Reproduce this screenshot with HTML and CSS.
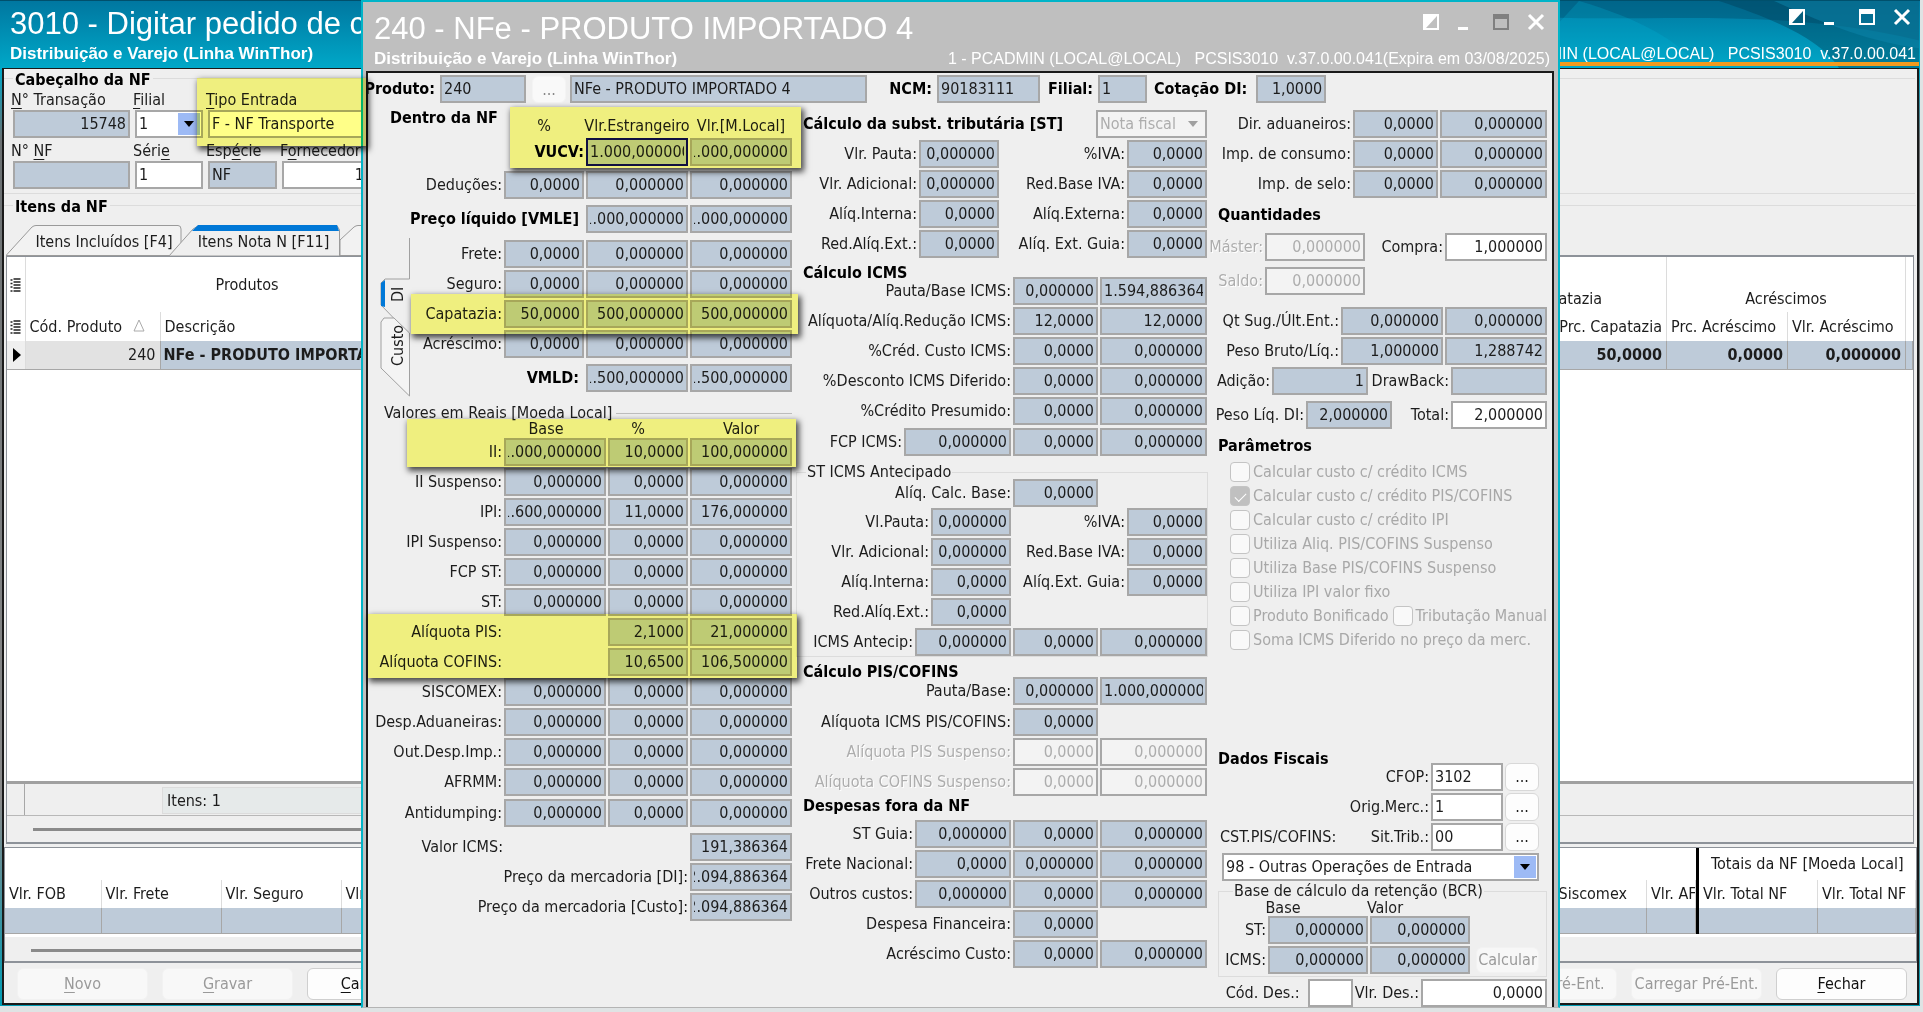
FILE: index.html
```html
<!DOCTYPE html>
<html lang="pt-BR">
<head>
<meta charset="utf-8">
<title>3010 - Digitar pedido de compra</title>
<link rel="stylesheet" href="styles.css">
</head>
<body>
<div class="desktop">

<main class="window">
  <header class="titlebar">
    <svg class="swirl" viewBox="0 0 360 68" preserveAspectRatio="none" aria-hidden="true">
      <path d="M0 17C110 20 230 8 360 40V0H0Z" fill="#00506e" opacity=".45"/>
      <path d="M20 0C80 18 120 40 140 68H0V22Z" fill="#00b4d8" opacity=".25"/>
      <path d="M160 0C220 20 262 40 280 68H360V0Z" fill="#003c56" opacity=".4"/>
      <path d="M215 0C250 15 300 40 360 48V0Z" fill="#0b86ab" opacity=".5"/>
    </svg>
    <div class="titles">
      <h1>3010 - Digitar pedido de compra</h1>
      <p class="sub">Distribuição e Varejo (Linha WinThor)</p>
    </div>
    <div class="titleside">
      <div class="controls">
        <button aria-label="Alternar"><svg viewBox="0 0 18 18"><path d="M1 1H17V17H1Z" fill="#fff"/><path d="M15 3V15H4Z" fill="#06607e"/></svg></button>
        <button aria-label="Minimizar"><svg viewBox="0 0 18 18"><path d="M1 14H11V17H1Z" fill="#fff"/></svg></button>
        <button aria-label="Maximizar"><svg viewBox="0 0 18 18"><path d="M1 1H17V17H1ZM3 6V15H15V6Z" fill="#fff" fill-rule="evenodd"/></svg></button>
        <button aria-label="Fechar janela"><svg viewBox="0 0 18 18"><path d="M2 2L16 16M16 2L2 16" stroke="#fff" stroke-width="3"/></svg></button>
      </div>
      <p class="env">1 - PCADMIN (LOCAL@LOCAL)   PCSIS3010  v.37.0.00.041</p>
    </div>
  </header>

  <div class="client">
    <section class="group head-group">
      <h2>Cabeçalho da NF</h2>
      <div class="line">
        <label class="stack s117"><span><u>N</u>° Transação</span><input class="num" value="15748" readonly></label>
        <label class="stack s68"><span><u>F</u>ilial</span><span class="combo"><select><option>1</option></select><i></i></span></label>
        <label class="stack s280"><span><u>T</u>ipo Entrada</span><span class="combo"><select><option>F - NF Transporte</option></select></span></label>
      </div>
      <div class="line">
        <label class="stack s117"><span>N° <u>N</u>F</span><input readonly></label>
        <label class="stack s68"><span>Séri<u>e</u></span><input class="white" value="1"></label>
        <label class="stack s69"><span>Esp<u>é</u>cie</span><input value="NF" readonly></label>
        <label class="stack s86"><span>F<u>o</u>rnecedor</span><input class="white num" value="1"></label>
      </div>
    </section>

    <section class="group items-group">
      <h2>Itens da NF</h2>
      <nav class="tabs">
        <button class="tab t1"><svg viewBox="0 0 176 31" preserveAspectRatio="none"><path d="M0 30.500L26 2Q28 .5 30 .5H172Q175 .5 175 4V30.500Z" fill="#f2f2f2" stroke="#9a9a9a"/></svg><span>Itens Incluídos [F4]</span></button>
        <button class="tab t2"><svg viewBox="0 0 171 31" preserveAspectRatio="none"><path d="M0 31L24 4L30 .5H168L170.500 5V31Z" fill="#efefef" stroke="#9a9a9a"/><path d="M23 6L29 0H168L170 6Z" fill="#0078d7"/></svg><span>Itens Nota N [F11]</span></button>
        <button class="tab t3"><svg viewBox="0 0 176 31" preserveAspectRatio="none"><path d="M0 15L14 2Q16 .5 18 .5H172Q175 .5 175 4V30.500H0Z" fill="#f2f2f2" stroke="#9a9a9a"/></svg><span>Custos [F12]</span></button>
      </nav>
      <div class="gridbox">
        <table class="items">
          <colgroup><col class="c18"><col class="c135"><col><col class="c140"><col class="c121"><col class="c118"><col class="c7"></colgroup>
          <thead>
            <tr class="bands">
              <th><svg class="rows" viewBox="0 0 10 14"><path d="M3 1H10M3 4H10M3 7H10M3 10H10M3 13H10M0 2H2M0 5.500H2M0 9H2M0 13H2" stroke="#222" stroke-width="1.500"/></svg></th>
              <th colspan="2" class="products">Produtos</th>
              <th class="band sep">Capatazia</th><th colspan="2" class="band mid sep">Acréscimos</th><th></th>
            </tr>
            <tr class="cols">
              <th><svg class="rows" viewBox="0 0 10 14"><path d="M3 1H10M3 4H10M3 7H10M3 10H10M3 13H10M0 2H2M0 5.500H2M0 9H2M0 13H2" stroke="#222" stroke-width="1.500"/></svg></th>
              <th class="sep">Cód. Produto <svg class="sort" viewBox="0 0 12 13"><path d="M6 1L11 12H1Z" fill="none" stroke="#aaa"/></svg></th>
              <th>Descrição</th><th class="end sep">Prc. Capatazia</th><th class="sep">Prc. Acréscimo</th><th class="sep">Vlr. Acréscimo</th><th></th>
            </tr>
          </thead>
          <tbody><tr>
            <td class="mark"><svg viewBox="0 0 8 14"><path d="M0 0L8 7L0 14Z" fill="#000"/></svg></td>
            <td class="code">240</td><td class="name">NFe - PRODUTO IMPORTADO 4</td><td>50,0000</td><td>0,0000</td><td>0,000000</td><td></td>
          </tr></tbody>
        </table>
        <div class="sumbar"><span class="ind"></span><span class="count">Itens: 1</span></div>
        <div class="hscroll"><span></span></div>
      </div>
    </section>

    <section class="totals">
      <div class="split">
        <table class="sums wide">
          <colgroup><col class="c96"><col class="c120"><col class="c120"><col><col class="c120"><col class="c49"></colgroup>
          <tr class="cap"><th colspan="6"></th></tr>
          <tr class="cols"><th>Vlr. FOB</th><th>Vlr. Frete</th><th>Vlr. Seguro</th><th>Vlr. Despesas</th><th class="end">Vlr. Siscomex</th><th>Vlr. AFRMM</th></tr>
          <tr class="vals"><td></td><td></td><td></td><td></td><td></td><td></td></tr>
        </table>
        <table class="sums narrow">
          <colgroup><col class="c120"><col></colgroup>
          <tr class="cap"><th colspan="2">Totais da NF [Moeda Local]</th></tr>
          <tr class="cols"><th>Vlr. Total NF</th><th>Vlr. Total NF</th></tr>
          <tr class="vals"><td></td><td></td></tr>
        </table>
      </div>
      <div class="hscroll"><span></span></div>
    </section>

    <footer class="actions">
      <button disabled><u>N</u>ovo</button>
      <button disabled><u>G</u>ravar</button>
      <button><u>C</u>ancelar</button>
      <span class="grow"></span>
      <button disabled>Salvar Pré-Ent.</button>
      <button disabled>Carregar Pré-Ent.</button>
      <button><u>F</u>echar</button>
    </footer>
  </div>
</main>

<section class="dialog" role="dialog" aria-labelledby="dlg">
  <header class="titlebar">
    <div class="titles">
      <h1 id="dlg">240 - NFe - PRODUTO IMPORTADO 4</h1>
      <p class="sub">Distribuição e Varejo (Linha WinThor)</p>
    </div>
    <div class="titleside">
      <div class="controls">
        <button aria-label="Alternar"><svg viewBox="0 0 18 18"><path d="M1 1H17V17H1Z" fill="#fff"/><path d="M15 3V15H4Z" fill="#bfbfbf"/></svg></button>
        <button aria-label="Minimizar"><svg viewBox="0 0 18 18"><path d="M1 14H11V17H1Z" fill="#fff"/></svg></button>
        <button aria-label="Maximizar"><svg viewBox="0 0 18 18"><path d="M1 1H17V17H1ZM3 6V15H15V6Z" fill="#808080" fill-rule="evenodd"/></svg></button>
        <button aria-label="Fechar"><svg viewBox="0 0 18 18"><path d="M2 2L16 16M16 2L2 16" stroke="#fff" stroke-width="3"/></svg></button>
      </div>
      <p class="env">1 - PCADMIN (LOCAL@LOCAL)   PCSIS3010  v.37.0.00.041(Expira em 03/08/2025)</p>
    </div>
  </header>

  <div class="body">
    <div class="ident">
      <label class="b first"><span>Produto:</span><input class="w86" value="240" readonly></label>
      <button class="dots" disabled>...</button>
      <input class="w297" aria-label="Descrição do produto" value="NFe - PRODUTO IMPORTADO 4" readonly>
      <label class="b ncm"><span>NCM:</span><input class="w103" value="90183111" readonly></label>
      <label class="b"><span>Filial:</span><input class="w49" value="1" readonly></label>
      <label class="b cot"><span>Cotação DI:</span><input class="num w70" value="1,0000" readonly></label>
    </div>

    <div class="columns">
      <!-- Dentro da NF -->
      <div class="col one">
        <div class="inside marked m-vucv">
          <h2>Dentro da NF</h2>
          <div class="vucv">
            <div class="row heads"><span class="w80">%</span><span class="w102">Vlr.Estrangeiro</span><span class="w102">Vlr.[M.Local]</span></div>
            <div class="row"><label class="b"><span>VUCV:</span><input class="focus w102" value="1.000,000000"></label><input aria-label="VUCV local" class="tail w102" value="1.000,000000" readonly></div>
          </div>
        </div>
        <div class="row g3"><label>Deduções:<input class="num w80" value="0,0000" readonly></label><input aria-label="Deduções" class="num w102" value="0,000000" readonly><input aria-label="Deduções local" class="num w102" value="0,000000" readonly></div>
        <div class="row g6"><label class="b wide-gap">Preço líquido [VMLE]<input class="tail w102" value="1.000,000000" readonly></label><input aria-label="VMLE local" class="tail w102" value="1.000,000000" readonly></div>
        <div class="di">
          <nav class="vtabs">
            <svg viewBox="0 0 30 160" aria-hidden="true">
              <path d="M29.500 0V41H5L1 45V67L29 96" fill="#efefef" stroke="#a0a0a0"/>
              <path d="M1 68V45L5 42V69Z" fill="#0078d7"/>
              <path d="M14 80H4L1 84V130L29.500 158V95Z" fill="#f4f4f4" stroke="#a0a0a0"/>
            </svg>
            <button>DI</button><button>Custo</button>
          </nav>
          <div class="rows-col">
            <div class="row"><label>Frete:<input class="num w80" value="0,0000" readonly></label><input aria-label="Frete" class="num w102" value="0,000000" readonly><input aria-label="Frete local" class="num w102" value="0,000000" readonly></div>
            <div class="row"><label>Seguro:<input class="num w80" value="0,0000" readonly></label><input aria-label="Seguro" class="num w102" value="0,000000" readonly><input aria-label="Seguro local" class="num w102" value="0,000000" readonly></div>
            <div class="row marked m-cap"><label>Capatazia:<input class="num w80" value="50,0000" readonly></label><input aria-label="Capatazia" class="num w102" value="500,000000" readonly><input aria-label="Capatazia local" class="num w102" value="500,000000" readonly></div>
            <div class="row"><label>Acréscimo:<input class="num w80" value="0,0000" readonly></label><input aria-label="Acréscimo" class="num w102" value="0,000000" readonly><input aria-label="Acréscimo local" class="num w102" value="0,000000" readonly></div>
            <div class="row g6"><label class="b wide-gap">VMLD:<input class="tail w102" value="1.500,000000" readonly></label><input aria-label="VMLD local" class="tail w102" value="1.500,000000" readonly></div>
          </div>
        </div>
        <div class="caption"><span>Valores em Reais [Moeda Local]</span></div>
        <div class="marked m-ii">
          <div class="row heads reais"><span class="w80">Base</span><span class="w60">%</span><span class="w102">Valor</span></div>
          <div class="row"><label>II:<input class="tail w102" value="1.000,000000" readonly></label><input aria-label="II %" class="num w80" value="10,0000" readonly><input aria-label="II valor" class="num w102" value="100,000000" readonly></div>
        </div>
        <div class="row"><label>II Suspenso:<input class="num w102" value="0,000000" readonly></label><input aria-label="II Suspenso %" class="num w80" value="0,0000" readonly><input aria-label="II Suspenso valor" class="num w102" value="0,000000" readonly></div>
        <div class="row"><label>IPI:<input class="tail w102" value="1.600,000000" readonly></label><input aria-label="IPI %" class="num w80" value="11,0000" readonly><input aria-label="IPI valor" class="num w102" value="176,000000" readonly></div>
        <div class="row"><label>IPI Suspenso:<input class="num w102" value="0,000000" readonly></label><input aria-label="IPI Suspenso %" class="num w80" value="0,0000" readonly><input aria-label="IPI Suspenso valor" class="num w102" value="0,000000" readonly></div>
        <div class="row"><label>FCP ST:<input class="num w102" value="0,000000" readonly></label><input aria-label="FCP ST %" class="num w80" value="0,0000" readonly><input aria-label="FCP ST valor" class="num w102" value="0,000000" readonly></div>
        <div class="row"><label>ST:<input class="num w102" value="0,000000" readonly></label><input aria-label="ST %" class="num w80" value="0,0000" readonly><input aria-label="ST valor" class="num w102" value="0,000000" readonly></div>
        <div class="marked m-pis">
          <div class="row"><label class="far">Alíquota PIS:<input class="num w80" value="2,1000" readonly></label><input aria-label="PIS valor" class="num w102" value="21,000000" readonly></div>
          <div class="row"><label class="far">Alíquota COFINS:<input class="num w80" value="10,6500" readonly></label><input aria-label="COFINS valor" class="num w102" value="106,500000" readonly></div>
        </div>
        <div class="row"><label>SISCOMEX:<input class="num w102" value="0,000000" readonly></label><input aria-label="SISCOMEX %" class="num w80" value="0,0000" readonly><input aria-label="SISCOMEX valor" class="num w102" value="0,000000" readonly></div>
        <div class="row"><label>Desp.Aduaneiras:<input class="num w102" value="0,000000" readonly></label><input aria-label="Desp.Aduaneiras %" class="num w80" value="0,0000" readonly><input aria-label="Desp.Aduaneiras valor" class="num w102" value="0,000000" readonly></div>
        <div class="row"><label>Out.Desp.Imp.:<input class="num w102" value="0,000000" readonly></label><input aria-label="Out.Desp.Imp. %" class="num w80" value="0,0000" readonly><input aria-label="Out.Desp.Imp. valor" class="num w102" value="0,000000" readonly></div>
        <div class="row"><label>AFRMM:<input class="num w102" value="0,000000" readonly></label><input aria-label="AFRMM %" class="num w80" value="0,0000" readonly><input aria-label="AFRMM valor" class="num w102" value="0,000000" readonly></div>
        <div class="row g3"><label>Antidumping:<input class="num w102" value="0,000000" readonly></label><input aria-label="Antidumping %" class="num w80" value="0,0000" readonly><input aria-label="Antidumping valor" class="num w102" value="0,000000" readonly></div>
        <div class="row g6"><label class="farther">Valor ICMS:<input class="num w102" value="191,386364" readonly></label></div>
        <div class="row"><label>Preço da mercadoria [DI]:<input class="tail w102" value="2.094,886364" readonly></label></div>
        <div class="row"><label>Preço da mercadoria [Custo]:<input class="tail w102" value="2.094,886364" readonly></label></div>
      </div>

      <!-- Impostos -->
      <div class="col two">
        <div class="row g3 between"><h2>Cálculo da subst. tributária [ST]</h2><span class="combo off w111"><select disabled aria-label="Origem do cálculo"><option>Nota fiscal</option></select><i></i></span></div>
        <div class="row"><label>Vlr. Pauta:<input class="num w80" value="0,000000" readonly></label><label class="p206">%IVA:<input class="num w80" value="0,0000" readonly></label></div>
        <div class="row"><label>Vlr. Adicional:<input class="num w80" value="0,000000" readonly></label><label class="p206">Red.Base IVA:<input class="num w80" value="0,0000" readonly></label></div>
        <div class="row"><label>Alíq.Interna:<input class="num w80" value="0,0000" readonly></label><label class="p206">Alíq.Externa:<input class="num w80" value="0,0000" readonly></label></div>
        <div class="row"><label>Red.Alíq.Ext.:<input class="num w80" value="0,0000" readonly></label><label class="p206">Alíq. Ext. Guia:<input class="num w80" value="0,0000" readonly></label></div>
        <h2 class="tuck">Cálculo ICMS</h2>
        <div class="row"><label>Pauta/Base ICMS:<input class="num w85" value="0,000000" readonly></label><input aria-label="Base ICMS" class="num w107" value="1.594,886364" readonly></div>
        <div class="row"><label>Alíquota/Alíq.Redução ICMS:<input class="num w85" value="12,0000" readonly></label><input aria-label="Redução ICMS" class="num w107" value="12,0000" readonly></div>
        <div class="row"><label>%Créd. Custo ICMS:<input class="num w85" value="0,0000" readonly></label><input aria-label="Créd. Custo ICMS" class="num w107" value="0,000000" readonly></div>
        <div class="row"><label>%Desconto ICMS Diferido:<input class="num w85" value="0,0000" readonly></label><input aria-label="Desconto ICMS Diferido" class="num w107" value="0,000000" readonly></div>
        <div class="row"><label>%Crédito Presumido:<input class="num w85" value="0,0000" readonly></label><input aria-label="Crédito Presumido" class="num w107" value="0,000000" readonly></div>
        <div class="row g3"><label>FCP ICMS:<input class="num w107" value="0,000000" readonly></label><input aria-label="FCP ICMS %" class="num w85" value="0,0000" readonly><input aria-label="FCP ICMS valor" class="num w107" value="0,000000" readonly></div>
        <fieldset class="antecip">
          <legend>ST ICMS Antecipado</legend>
          <div class="row skip"><label>Alíq. Calc. Base:<input class="num w85" value="0,0000" readonly></label></div>
          <div class="row"><label>Vl.Pauta:<input class="num w80" value="0,000000" readonly></label><label class="p194">%IVA:<input class="num w80" value="0,0000" readonly></label></div>
          <div class="row"><label>Vlr. Adicional:<input class="num w80" value="0,000000" readonly></label><label class="p194">Red.Base IVA:<input class="num w80" value="0,0000" readonly></label></div>
          <div class="row"><label>Alíq.Interna:<input class="num w80" value="0,0000" readonly></label><label class="p194">Alíq.Ext. Guia:<input class="num w80" value="0,0000" readonly></label></div>
          <div class="row skip196"><label>Red.Alíq.Ext.:<input class="num w80" value="0,0000" readonly></label></div>
          <div class="row"><label>ICMS Antecip:<input class="num w96" value="0,000000" readonly></label><input aria-label="ICMS Antecip %" class="num w85" value="0,0000" readonly><input aria-label="ICMS Antecip valor" class="num w107" value="0,000000" readonly></div>
        </fieldset>
        <h2 class="tuck">Cálculo PIS/COFINS</h2>
        <div class="row g3"><label>Pauta/Base:<input class="num w85" value="0,000000" readonly></label><input aria-label="Base PIS/COFINS" class="num w107" value="1.000,000000" readonly></div>
        <div class="row g3 skip"><label>Alíquota ICMS PIS/COFINS:<input class="num w85" value="0,0000" readonly></label></div>
        <div class="row"><label class="dim">Alíquota PIS Suspenso:<input class="num w85" value="0,0000" disabled></label><input aria-label="PIS Suspenso" class="num w107" value="0,000000" disabled></div>
        <div class="row"><label class="dim">Alíquota COFINS Suspenso:<input class="num w85" value="0,0000" disabled></label><input aria-label="COFINS Suspenso" class="num w107" value="0,000000" disabled></div>
        <h2 class="flat">Despesas fora da NF</h2>
        <div class="row"><label>ST Guia:<input class="num w96" value="0,000000" readonly></label><input aria-label="ST Guia %" class="num w85" value="0,0000" readonly><input aria-label="ST Guia valor" class="num w107" value="0,000000" readonly></div>
        <div class="row"><label>Frete Nacional:<input class="num w96" value="0,0000" readonly></label><input aria-label="Frete Nacional base" class="num w85" value="0,000000" readonly><input aria-label="Frete Nacional valor" class="num w107" value="0,000000" readonly></div>
        <div class="row"><label>Outros custos:<input class="num w96" value="0,000000" readonly></label><input aria-label="Outros custos %" class="num w85" value="0,0000" readonly><input aria-label="Outros custos valor" class="num w107" value="0,000000" readonly></div>
        <div class="row skip"><label>Despesa Financeira:<input class="num w85" value="0,0000" readonly></label></div>
        <div class="row"><label>Acréscimo Custo:<input class="num w85" value="0,0000" readonly></label><input aria-label="Acréscimo Custo valor" class="num w107" value="0,000000" readonly></div>
      </div>

      <!-- Quantidades e dados fiscais -->
      <div class="col three">
        <div class="row g3"><label>Dir. aduaneiros:<input class="num w85" value="0,0000" readonly></label><input aria-label="Dir. aduaneiros valor" class="num w107" value="0,000000" readonly></div>
        <div class="row"><label>Imp. de consumo:<input class="num w85" value="0,0000" readonly></label><input aria-label="Imp. de consumo valor" class="num w107" value="0,000000" readonly></div>
        <div class="row"><label>Imp. de selo:<input class="num w85" value="0,0000" readonly></label><input aria-label="Imp. de selo valor" class="num w107" value="0,000000" readonly></div>
        <h2 class="h33">Quantidades</h2>
        <div class="row"><label class="dim">Máster:<input class="num w100" value="0,000000" disabled></label><label class="p180">Compra:<input class="white num w102" value="1,000000"></label></div>
        <div class="row g6 skip182"><label class="dim">Saldo:<input class="num w100" value="0,000000" disabled></label></div>
        <div class="row g12"><label>Qt Sug./Últ.Ent.:<input class="num w102" value="0,000000" readonly></label><input aria-label="Última entrada" class="num w102" value="0,000000" readonly></div>
        <div class="row"><label>Peso Bruto/Líq.:<input class="num w102" value="1,000000" readonly></label><input aria-label="Peso líquido" class="num w102" value="1,288742" readonly></div>
        <div class="row"><label>Adição:<input class="num w96" value="1" readonly></label><label class="p177">DrawBack:<input class="w96" readonly></label></div>
        <div class="row g6"><label>Peso Líq. DI:<input class="num w86" value="2,000000" readonly></label><label class="p153 total">Total:<input class="white num w96" value="2,000000"></label></div>
        <h2 class="h33">Parâmetros</h2>
        <div class="checks">
          <label><input type="checkbox" disabled>Calcular custo c/ crédito ICMS</label>
          <label><input type="checkbox" disabled checked>Calcular custo c/ crédito PIS/COFINS</label>
          <label><input type="checkbox" disabled>Calcular custo c/ crédito IPI</label>
          <label><input type="checkbox" disabled>Utiliza Aliq. PIS/COFINS Suspenso</label>
          <label><input type="checkbox" disabled>Utiliza Base PIS/COFINS Suspenso</label>
          <label><input type="checkbox" disabled>Utiliza IPI valor fixo</label>
          <div class="two-checks"><label><input type="checkbox" disabled>Produto Bonificado</label><label><input type="checkbox" disabled>Tributação Manual</label></div>
          <label><input type="checkbox" disabled>Soma ICMS Diferido no preço da merc.</label>
        </div>

        <div class="fiscal">
          <h2>Dados Fiscais</h2>
          <div class="row in"><label>CFOP:<input class="white w72" value="3102"></label><button class="dots" aria-label="Buscar CFOP">...</button></div>
          <div class="row in"><label>Orig.Merc.:<input class="white w72" value="1"></label><button class="dots" aria-label="Buscar origem">...</button></div>
          <div class="row in"><label class="cst" for="cst">CST.PIS/COFINS:</label><label class="trib">Sit.Trib.:<input class="white w72" value="00"></label><button class="dots" aria-label="Buscar situação">...</button></div>
          <span class="combo outras"><select id="cst"><option>98 - Outras Operações de Entrada</option></select><i></i></span>
          <fieldset class="bcr">
            <legend>Base de cálculo da retenção (BCR)</legend>
            <div class="row heads"><span class="w100">Base</span><span class="w100">Valor</span></div>
            <div class="row skipb"><label>ST:<input class="num w100" value="0,000000" readonly></label><input aria-label="ST valor retido" class="num w100" value="0,000000" readonly></div>
            <div class="row"><label>ICMS:<input class="num w100" value="0,000000" readonly></label><input aria-label="ICMS valor retido" class="num w100" value="0,000000" readonly><button class="calc" disabled>Calcular</button></div>
          </fieldset>
          <div class="row"><label class="cod">Cód. Des.:<input class="white w45"></label><label>Vlr. Des.:<input class="white num w126" value="0,0000"></label></div>
        </div>
      </div>
    </div>
  </div>
</section>

<div class="note"></div>
</div>
</body>
</html>
```
FILE: styles.css
```css
* { box-sizing: border-box; }
body {
  margin: 0;
  font-family: "DejaVu Sans Condensed", "DejaVu Sans", sans-serif;
  font-stretch: condensed;
  font-size: 16px;
  line-height: 20px;
  color: #1c1c1c;
}
h1, h2, p, fieldset, legend { margin: 0; padding: 0; }
fieldset { border: 1px solid #dcdcdc; min-width: 0; }
h2 { font-size: 16px; line-height: 20px; color: #000; white-space: nowrap; }
button, input, select { font: inherit; color: inherit; margin: 0; }
u { text-underline-offset: 3px; }

.desktop {
  position: relative;
  display: flex;
  min-height: 100vh;
  padding-bottom: 6px;
  background: #dfe3e4;
  overflow: hidden;
}

/* Windows */
.window {
  flex: 1;
  min-width: 0;
  display: flex;
  flex-direction: column;
  margin-right: 3px;
  padding: 0 1px 1px 2px;
  border-top: 1px solid #00506c;
  background: linear-gradient(#0077a0, #00a8c8 68px, #6b7072 140px, #8a8a8a 800px, #009cb4);
}
.titlebar { position: relative; display: flex; justify-content: space-between; color: #fff; }
.window > .titlebar { height: 67px; padding: 3px 3px 0 8px; background: linear-gradient(#0077a0, #00a8c8); }
.titlebar h1 { font: 31px/40px "Liberation Sans", sans-serif; white-space: nowrap; }
.titlebar .sub { font: bold 17px/20px "Liberation Sans", sans-serif; white-space: nowrap; }
.titles, .titleside { position: relative; }
.titleside { display: flex; flex-direction: column; align-items: flex-end; }
.env { font: 16px/20px "Liberation Sans", sans-serif; white-space: pre; }
.controls { display: flex; gap: 17px; height: 40px; padding: 4px 5px 0 0; }
.controls button { width: 18px; height: 18px; padding: 0; border: 0; background: none; }
.controls svg { display: block; width: 18px; height: 18px; }
.swirl { position: absolute; right: 0; top: 0; width: 360px; height: 67px; }
.window > .titlebar::after { content: ""; position: absolute; right: 0; bottom: 2px; width: 50%; height: 4px; background: #f29a1e; }
.client {
  flex: 1;
  display: flex;
  flex-direction: column;
  border: 2px solid #1a1a1a;
  border-top-width: 1px;
  background: #efefef;
}

.dialog {
  position: absolute;
  left: 361px;
  right: 363px;
  top: 0;
  bottom: 4px;
  display: flex;
  flex-direction: column;
  border: 2px solid #00b4c8;
  border-bottom: 1px solid #b4b4b4;
  background: #bfbfbf;
}
.dialog > .titlebar { height: 69px; padding: 7px 8px 0 11px; }
.body {
  flex: 1;
  margin: 0 4px 0 3px;
  border: 2px solid #1a1a1a;
  border-bottom: 0;
  background: #efefef;
  display: flex;
  flex-direction: column;
  padding-top: 2px;
}

/* Fields */
input:not([type="checkbox"]), .combo {
  height: 28px;
  min-width: 0;
  padding: 0 2px 2px;
  border: 2px solid #a7a7a7;
  border-radius: 0;
  background: #becbd9;
  color: #1c1c1c;
  font-weight: normal;
  outline: 0;
  flex: none;
}
input.white:not([type="checkbox"]), .combo { background: #fff; }
input.num { text-align: right; }
input.tail { direction: rtl; text-align: start; }
input.focus:not([type="checkbox"]) { border-color: #10107a; }
input:disabled:not([type="checkbox"]) { background: #f3f3f3; color: #adadad; }
.dim { color: #adadad; text-shadow: 1px 1px #fff; }
.combo { display: flex; padding: 0; }
.combo select { appearance: none; border: 0; padding: 0 2px; width: 100%; min-width: 0; background: transparent; outline: 0; opacity: 1; }
.combo i { flex: none; width: 22px; margin: 1px 1px 1px 0; background: #9dbaf5; display: grid; place-items: center; }
.combo i::before { content: ""; border: 5px solid transparent; border-top: 6px solid #000; border-bottom: 0; }
.combo.off { background: #f3f3f3; }
.combo.off select { color: #adadad; }
.combo.off i { background: none; }
.combo.off i::before { border-top-color: #a0a0a0; }

.row { display: flex; justify-content: flex-end; gap: 2px; margin-top: 2px; min-height: 28px; }
.row label, .ident label { display: flex; justify-content: flex-end; align-items: center; gap: 2px; white-space: nowrap; }
label.b { font-weight: bold; color: #000; }
.row label.wide-gap { gap: 7px; }
.row label.far { gap: 106px; }
.row label.farther { gap: 187px; }
.row.g3 { margin-top: 3px; }
.row.g6 { margin-top: 6px; }
.row.g12 { margin-top: 12px; }
.w45 { width: 45px; } .w49 { width: 49px; } .w60 { width: 60px; } .w70 { width: 70px; }
.w72 { width: 72px; } .w80 { width: 80px; } .w85 { width: 85px; } .w86 { width: 86px; }
.w96 { width: 96px; } .w100 { width: 100px; } .w102 { width: 102px; } .w103 { width: 103px; }
.w107 { width: 107px; } .w111 { width: 111px; } .w126 { width: 126px; } .w297 { width: 297px; }
.p153 { width: 153px; } .p177 { width: 177px; } .p180 { width: 180px; }
.p194 { width: 194px; } .p206 { width: 206px; }
.row.skip { padding-right: 109px; }
.row.skip182 { padding-right: 182px; }
.row.skip196 { padding-right: 196px; }
.heads { min-height: 20px; }
.heads span { display: flex; justify-content: center; white-space: nowrap; }

.dots, .calc {
  height: 28px;
  width: 34px;
  flex: none;
  padding: 0;
  border: 1px solid #d8d8d8;
  border-radius: 6px;
  background: #fdfdfd;
}
.dots:disabled { color: #888; background: #f9f9f9; border-color: #f4f4f4; }
.calc { width: 63px; height: 26px; margin: 1px 0 0 4px; }
.calc:disabled { color: #9a9a9a; background: #f7f7f7; border-color: #f2f2f2; }

.ident { display: flex; }
.ident label { gap: 5px; }
.ident .first { width: 158px; overflow: hidden; }
.ident .dots { margin: 1px 4px 0 6px; height: 27px; }
.ident .ncm { width: 173px; }
.ident .ncm + label { margin-left: 8px; }
.ident .cot { margin-left: 7px; gap: 9px; }

.columns { flex: 1; display: grid; grid-template-columns: 428fr 412fr 344fr; padding-top: 4px; }
.col { min-width: 0; }
.col.one { padding-right: 4px; }
.col.three { display: flex; flex-direction: column; padding-right: 5px; }

/* Yellow highlighter marks */
.marked { position: relative; }
.marked::after, .note {
  content: "";
  position: absolute;
  background: #ffff88;
  mix-blend-mode: multiply;
  box-shadow: 2px 3px 6px 1px rgba(0, 0, 0, .7);
  pointer-events: none;
}
.m-vucv::after { inset: 0 -9px 0 142px; }
.m-cap::after { inset: -6px -6px -6px 0; }
.m-ii::after { inset: 0 -4px -1px 39px; }
.m-pis::after { inset: -4px -5px -2px 0; }
.note { left: 197px; top: 78px; width: 169px; height: 68px; }

.inside { display: flex; justify-content: space-between; height: 61px; }
.inside h2 { padding: 1px 0 0 22px; }
.vucv { padding-top: 9px; }
.vucv .row { margin-top: 0; }
.vucv .heads { height: 22px; }

.di { display: flex; gap: 1px; margin-top: 5px; }
.vtabs { position: relative; width: 42px; padding: 42px 0 0 20px; display: flex; flex-direction: column; gap: 14px; }
.vtabs svg { position: absolute; left: 12px; top: 0; width: 30px; height: 160px; }
.vtabs button { position: relative; width: 20px; padding: 0; border: 0; background: none; writing-mode: vertical-rl; transform: rotate(180deg); height: 28px; }
.vtabs button + button { height: 46px; }
.rows-col { flex: 1; }

.caption { display: flex; align-items: center; gap: 4px; height: 20px; margin-top: 11px; padding-left: 16px; white-space: nowrap; }
.caption::after { content: ""; flex: 1; height: 1px; background: #bdbdbd; }
.m-ii { margin-top: -4px; }
.m-ii .heads { margin-top: 0; height: 19px; min-height: 0; }
.reais { gap: 22px; }
.m-ii .heads + .row { margin-top: 0; }

.col.two { padding-right: 1px; }
.between { justify-content: space-between; align-items: center; }
.col.two h2 { padding-left: 7px; }
.tuck { margin: 5px 0 -8px; }
.flat { height: 22px; }
.antecip { margin: 9px -1px 0 0; }
.antecip legend { margin-left: 9px; padding: 0 1px; line-height: 14px; }
.antecip .row:nth-of-type(1) { margin-top: 0; }
.antecip .row:nth-of-type(2) { margin-top: 1px; }

.h33 { line-height: 33px; padding-left: 10px; }
.checks { display: flex; flex-direction: column; padding-left: 22px; gap: 4px; color: #a8a8a8; white-space: nowrap; }
.checks label { display: flex; align-items: center; gap: 3px; }
.two-checks { display: flex; gap: 4px; }
.checks input {
  appearance: none;
  flex: none;
  width: 20px;
  height: 20px;
  border: 1px solid #c4c4c4;
  border-radius: 4px;
  background: #f9f9f9;
}
.checks input:checked { background: #c0c0c0; display: grid; place-items: center; }
.checks input:checked::before { content: ""; width: 10px; height: 5px; border: solid #fff; border-width: 0 0 1px 1px; rotate: -45deg; }

.fiscal { margin-top: auto; }
.fiscal h2 { padding-left: 10px; margin-bottom: -8px; }
.row.in { padding-right: 8px; }
.cst { margin-right: auto; padding-left: 12px; }
.combo.outras { margin: 2px 8px 0 14px; }
.bcr { margin: 1px 0 0 10px; padding: 0 7px 2px 0; }
.bcr legend { margin-left: 14px; padding: 0 1px; line-height: 18px; }
.bcr .row { margin-top: 2px; }
.bcr .row.heads { margin-top: 0; min-height: 16px; padding-right: 104px; line-height: 16px; }
.bcr .row.skipb { margin-top: 0; padding-right: 69px; }
.row label.cod { gap: 8px; }

/* Main window contents */
.group { border-top: 1px solid #dcdcdc; }
.head-group { margin: 9px 2px 0 0; height: 116px; border-bottom: 1px solid #dcdcdc; }
.group h2 { width: max-content; margin: -9px 0 0 9px; padding: 0 2px; background: #efefef; }
.line { display: flex; gap: 5px; padding-left: 9px; margin-bottom: 3px; }
.stack { display: flex; flex-direction: column; }
.stack > span:first-child { margin-left: -2px; line-height: 20px; white-space: nowrap; }
.stack input { width: 100%; }
.s117 { width: 117px; } .s68 { width: 68px; } .s69 { width: 69px; } .s86 { width: 86px; } .s280 { width: 280px; }

.items-group { flex: 1; display: flex; flex-direction: column; margin: 11px 1px 0 0; }
.tabs { display: flex; height: 30px; margin-top: 8px; padding-left: 2px; }
.tab { position: relative; border: 0; padding: 4px 0 0; background: none; white-space: nowrap; }
.tab svg { position: absolute; inset: 0; width: 100%; height: 31px; }
.tab span { position: relative; }
.t1 { width: 176px; padding-left: 20px; }
.t2 { width: 171px; margin-left: -13px; z-index: 1; padding-left: 18px; }
.t3 { width: 176px; }
.gridbox { flex: 1; display: flex; flex-direction: column; margin: 0 2px; border: 1px solid #8d9299; border-width: 2px 1px; background: #fff; }
table { border-collapse: collapse; table-layout: fixed; width: 100%; }
th { font-weight: normal; text-align: left; padding: 0 4px; white-space: nowrap; overflow: hidden; }
td { padding: 0 4px; }
.c7 { width: 7px; } .c18 { width: 18px; } .c49 { width: 49px; } .c96 { width: 96px; } .c118 { width: 118px; }
.c120 { width: 120px; } .c121 { width: 121px; } .c135 { width: 135px; } .c140 { width: 140px; }
.items .bands th { height: 55px; }
.items .cols th { height: 29px; }
.items .sep { border-right: 1px solid #dcdcdc; }
.items .bands .products { padding-left: 190px; }
.items .bands .band { vertical-align: bottom; padding-bottom: 3px; }
.items .mid { text-align: center; }
.items .end { text-align: right; }
.sums .end { text-align: right; padding-right: 19px; }
.items tr > :first-child { border-right: 1px solid #dcdcdc; padding: 0 3px; }
.items svg.rows { display: block; width: 11px; height: 14px; }
.items .sort { width: 12px; height: 13px; margin-left: 6px; }
.items td { height: 28px; border-right: 1px solid #a7a7a7; border-bottom: 1px solid #a7a7a7; background: #becbd9; font-weight: bold; text-align: right; white-space: nowrap; }
.items td.code { background: #e2e2e2; font-weight: normal; }
.items td.name { text-align: left; padding-left: 3px; }
.items td.mark { background: #efefef; padding-left: 6px; }
.mark svg { display: block; width: 8px; height: 14px; }
.sumbar { margin-top: auto; height: 35px; display: flex; border-top: 3px solid #a0a0a0; border-bottom: 1px solid #b8b8b8; background: #efefef; }
.ind { width: 18px; border-right: 1px solid #a7a7a7; }
.count { margin: 3px 0 1px 137px; padding: 3px 4px 0; width: 300px; background: #e6eaea; border: 1px solid #dcdcdc; }
.hscroll { height: 26px; padding: 12px 26px 0; background: #efefef; }
.hscroll span { display: block; width: 70%; height: 3px; background: #8a8a8a; }

.totals { margin: 3px 0 0; border: solid #8d9299; border-width: 1px 1px 2px; background: #fff; }
.split { display: flex; }
.sums.wide { flex: 1; }
.sums.narrow { width: 220px; flex: none; border-left: 3px solid #000; }
.sums .cap th { height: 32px; text-align: center; }
.sums .cols th { height: 28px; border-right: 1px solid #dcdcdc; }
.sums td { height: 26px; background: #becbd9; border-right: 1px solid #a7a7a7; border-bottom: 1px solid #a7a7a7; }
.totals .hscroll { margin-top: 3px; height: 24px; }

.actions { display: flex; gap: 14px; padding: 5px 10px 3px 13px; }
.actions button { width: 131px; height: 32px; border: 1px solid #cfcfcf; border-radius: 6px; background: #fdfdfd; padding: 0; white-space: nowrap; color: #111; }
.actions button:disabled { color: #9a9a9a; background: #f8f8f8; border-color: #f2f2f2; }
.grow { flex: 1; }
```
